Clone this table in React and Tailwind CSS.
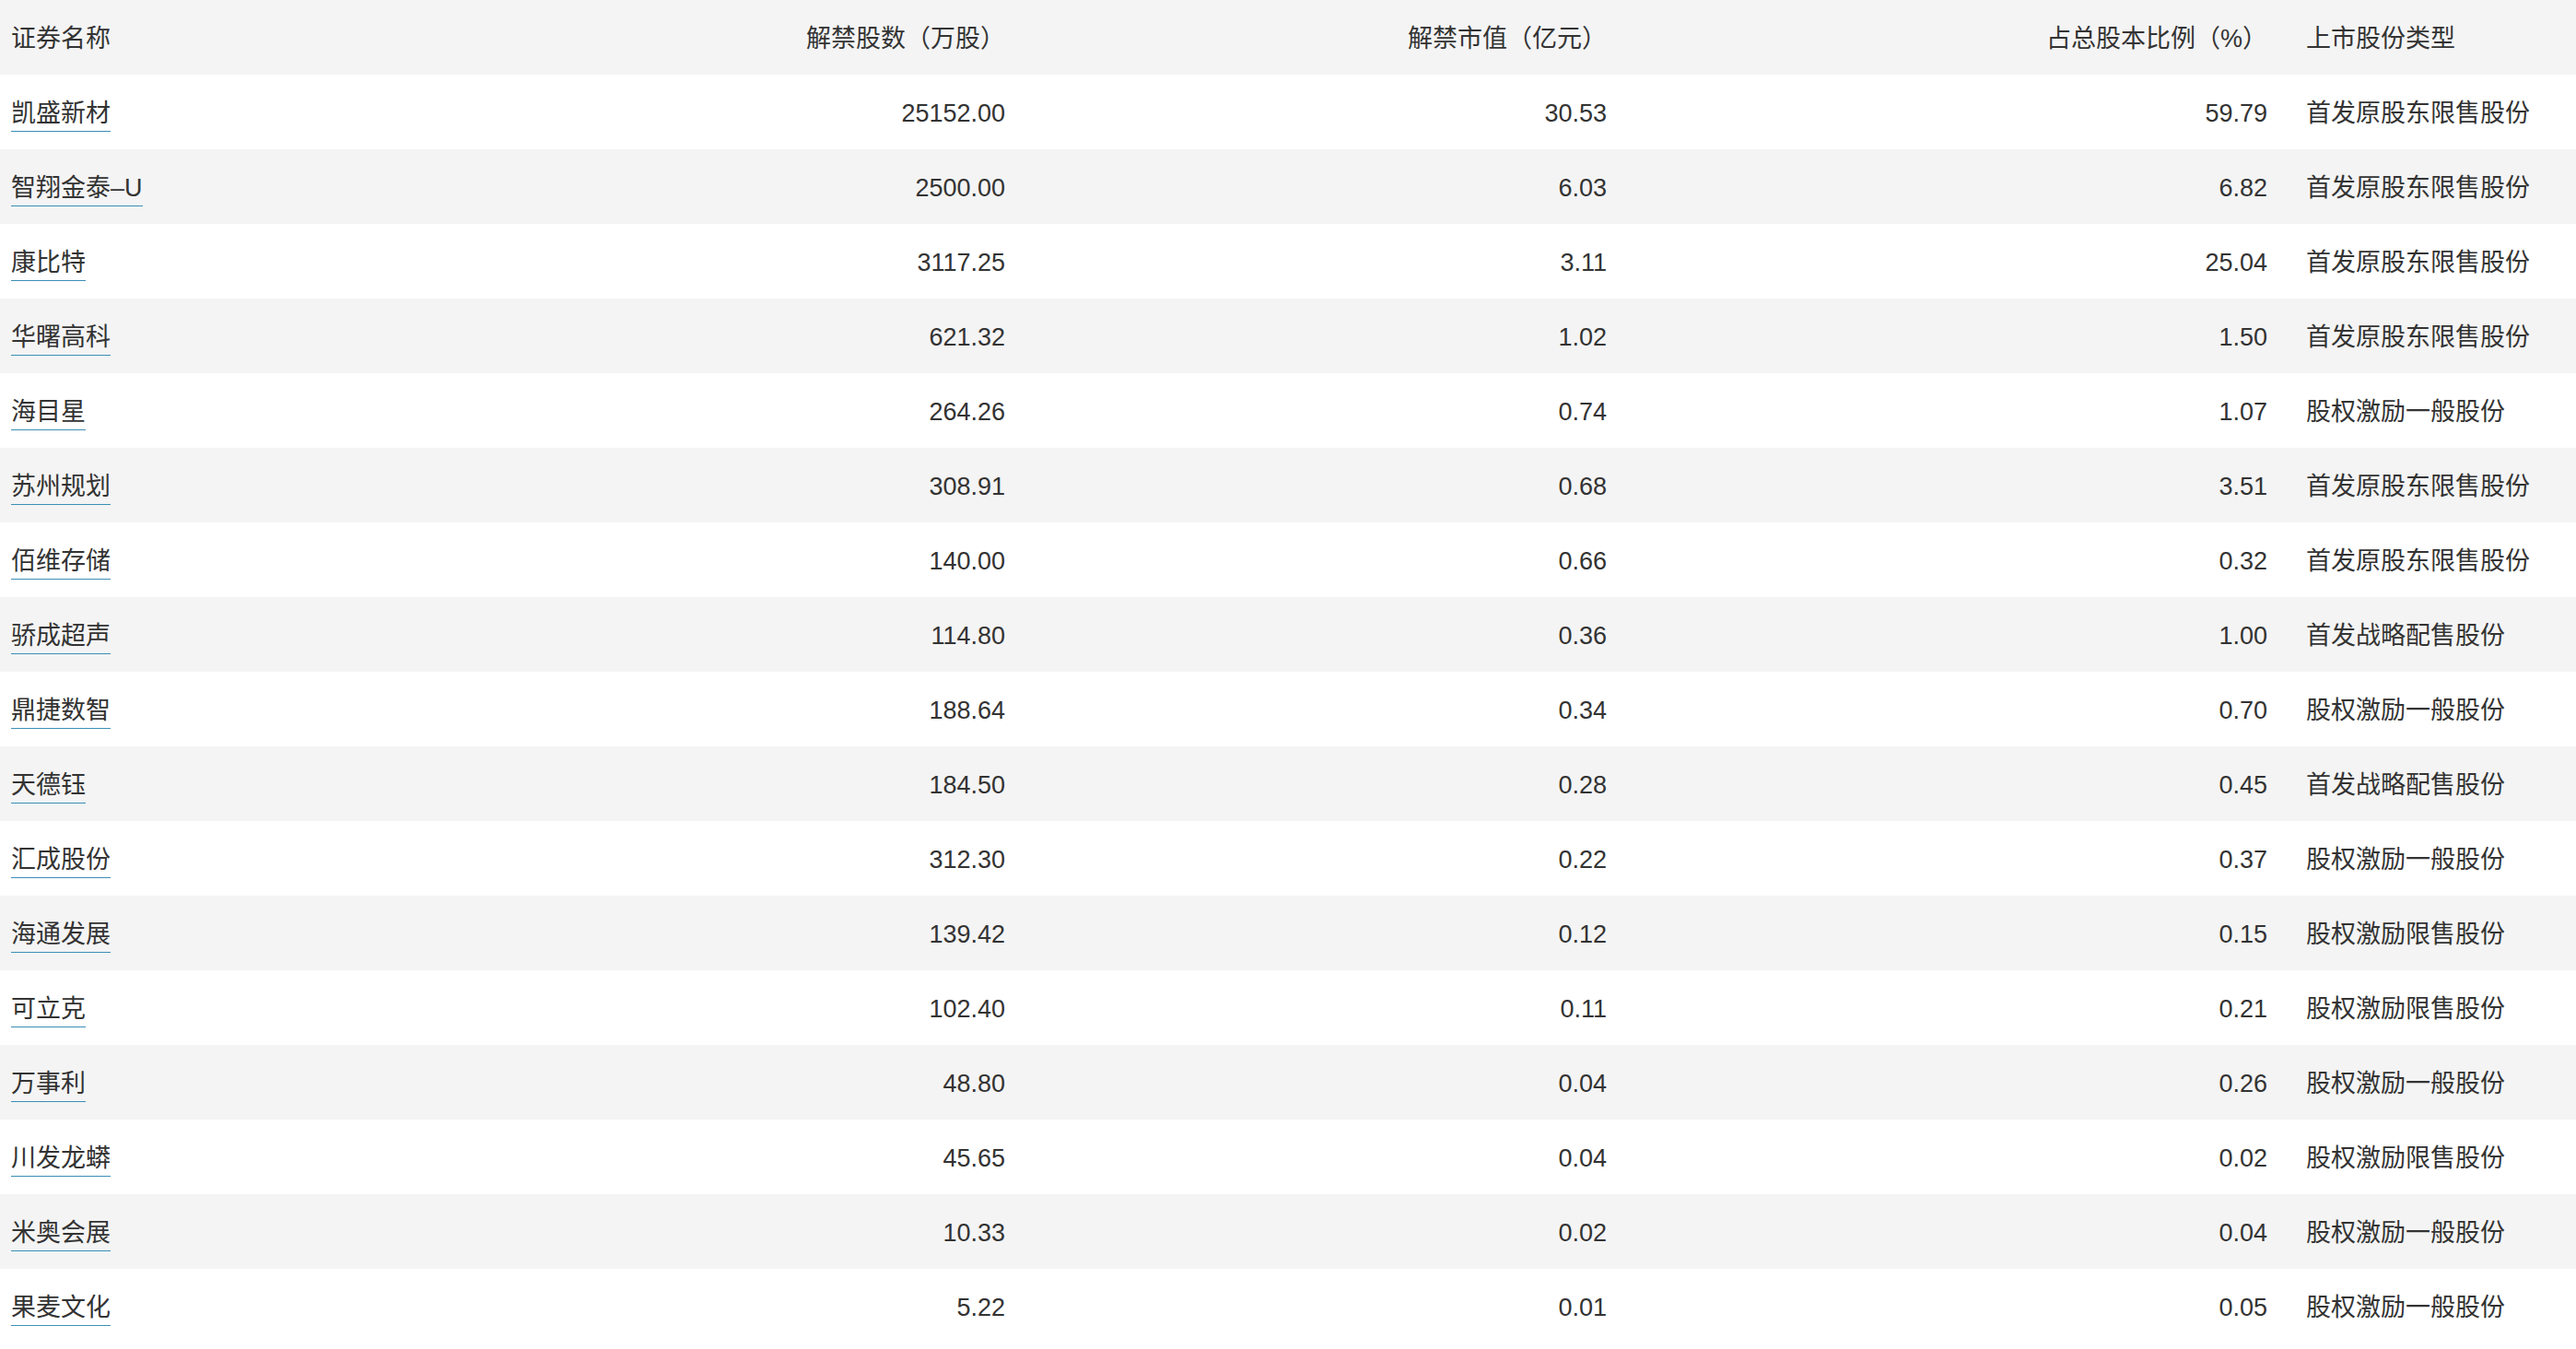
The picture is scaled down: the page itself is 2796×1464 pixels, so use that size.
const rows = [
  ["凯盛新材", "25152.00", "30.53", "59.79", "首发原股东限售股份"],
  ["智翔金泰–U", "2500.00", "6.03", "6.82", "首发原股东限售股份"],
  ["康比特", "3117.25", "3.11", "25.04", "首发原股东限售股份"],
  ["华曙高科", "621.32", "1.02", "1.50", "首发原股东限售股份"],
  ["海目星", "264.26", "0.74", "1.07", "股权激励一般股份"],
  ["苏州规划", "308.91", "0.68", "3.51", "首发原股东限售股份"],
  ["佰维存储", "140.00", "0.66", "0.32", "首发原股东限售股份"],
  ["骄成超声", "114.80", "0.36", "1.00", "首发战略配售股份"],
  ["鼎捷数智", "188.64", "0.34", "0.70", "股权激励一般股份"],
  ["天德钰", "184.50", "0.28", "0.45", "首发战略配售股份"],
  ["汇成股份", "312.30", "0.22", "0.37", "股权激励一般股份"],
  ["海通发展", "139.42", "0.12", "0.15", "股权激励限售股份"],
  ["可立克", "102.40", "0.11", "0.21", "股权激励限售股份"],
  ["万事利", "48.80", "0.04", "0.26", "股权激励一般股份"],
  ["川发龙蟒", "45.65", "0.04", "0.02", "股权激励限售股份"],
  ["米奥会展", "10.33", "0.02", "0.04", "股权激励一般股份"],
  ["果麦文化", "5.22", "0.01", "0.05", "股权激励一般股份"],
];

const gridCols = "grid grid-cols-[620px_483px_653px_717px_1fr]";

const App = () => {
  return (
    <div
      className="w-full min-h-screen bg-white text-[#333333] text-[27px]"
      style={{ fontFamily: '"Liberation Sans", "Noto Sans CJK SC", sans-serif' }}
    >
      <div className={`${gridCols} h-[81px] pt-[3px] items-center bg-[#f4f4f4]`}>
        <div className="px-3">证券名称</div>
        <div className="px-3 text-right">解禁股数（万股）</div>
        <div className="px-3 text-right">解禁市值（亿元）</div>
        <div className="px-3 text-right">占总股本比例（%）</div>
        <div className="pl-[30px] pr-3">上市股份类型</div>
      </div>
      {rows.map((r, i) => (
        <div
          key={r[0]}
          className={`${gridCols} h-[81px] pt-[3px] items-center ${
            i % 2 === 0 ? "bg-white" : "bg-[#f4f4f4]"
          }`}
        >
          <div className="px-3">
            <span className="inline-block leading-[38px] border-b border-[#3b8fb5]">
              {r[0]}
            </span>
          </div>
          <div className="px-3 text-right">{r[1]}</div>
          <div className="px-3 text-right">{r[2]}</div>
          <div className="px-3 text-right">{r[3]}</div>
          <div className="pl-[30px] pr-3">{r[4]}</div>
        </div>
      ))}
    </div>
  );
};

export default App;
